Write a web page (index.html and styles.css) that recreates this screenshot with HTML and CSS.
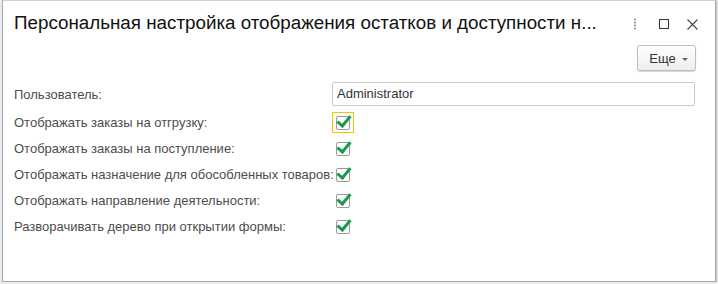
FILE: index.html
```html
<!DOCTYPE html>
<html lang="ru">
<head>
  <meta charset="UTF-8">
  <title>Персональная настройка</title>
  <link rel="stylesheet" href="styles.css">
</head>
<body>

<div class="window">
  <div class="titlebar">
    <div class="title">Персональная настройка отображения остатков и доступности н...</div>
    <div class="win-btns">
      <span class="btn-icon">
        <svg width="4" height="12" viewBox="0 0 4 12"><circle cx="2" cy="1.5" r="1" fill="#888"/><circle cx="2" cy="4.5" r="1" fill="#888"/><circle cx="2" cy="7.5" r="1" fill="#888"/><circle cx="2" cy="10.5" r="1" fill="#888"/></svg>
      </span>
      <span class="btn-icon">
        <svg width="10" height="10" viewBox="0 0 10 10"><rect x="0.5" y="0.5" width="9" height="9" fill="none" stroke="#333" stroke-width="1"/></svg>
      </span>
      <span class="btn-icon">
        <svg width="11" height="11" viewBox="0 0 11 11"><path d="M0.5 0.5 L10.5 10.5 M10.5 0.5 L0.5 10.5" stroke="#444" stroke-width="1.1"/></svg>
      </span>
    </div>
  </div>

  <div class="toolbar">
    <button class="more-btn">Еще <span class="caret"></span></button>
  </div>

  <div class="form">
    <div class="row">
      <div class="label">Пользователь:</div>
      <div class="input">Administrator</div>
    </div>
    <div class="row">
      <div class="label">Отображать заказы на отгрузку:</div>
      <div class="check-wrap focused"><span class="check"></span></div>
    </div>
    <div class="row">
      <div class="label">Отображать заказы на поступление:</div>
      <div class="check-wrap"><span class="check"></span></div>
    </div>
    <div class="row">
      <div class="label">Отображать назначение для обособленных товаров:</div>
      <div class="check-wrap"><span class="check"></span></div>
    </div>
    <div class="row">
      <div class="label">Отображать направление деятельности:</div>
      <div class="check-wrap"><span class="check"></span></div>
    </div>
    <div class="row">
      <div class="label">Разворачивать дерево при открытии формы:</div>
      <div class="check-wrap"><span class="check"></span></div>
    </div>
  </div>
</div>

</body>
</html>
```

FILE: styles.css
```css
body {
  margin: 0;
  background: #ececec;
  font-family: 'Liberation Sans', Arial, sans-serif;
  color: #4d4d4d;
}

.window {
  margin: 0 2px 0 2px;
  height: 282px;
  box-sizing: border-box;
  background: #fff;
  border: 1px solid #a9a9a9;
  border-top-color: #d0d0d0;
  box-shadow: 1px 1px 1px #c8c8c8;
}

.titlebar {
  display: flex;
  align-items: center;
  height: 46px;
  padding: 0 8px 0 11px;
}

.title {
  flex: 1;
  font-size: 18.8px;
  color: #111;
  white-space: nowrap;
  padding-bottom: 2px;
}

.win-btns {
  display: flex;
  align-items: center;
}

.btn-icon {
  width: 29px;
  display: flex;
  justify-content: center;
  align-items: center;
}

.toolbar {
  display: flex;
  justify-content: flex-end;
  padding: 0 19px 0 0;
  height: 32px;
}

.more-btn {
  height: 26px;
  width: 59px;
  margin-top: -2px;
  padding: 0 0 0 4px;
  border: 1px solid #bdbdbd;
  border-radius: 3px;
  background: linear-gradient(#ffffff, #eeeeee);
  box-shadow: 0 1px 1px #d4d4d4;
  font-family: 'Liberation Sans', Arial, sans-serif;
  font-size: 13px;
  color: #333;
  display: flex;
  align-items: center;
  justify-content: center;
  gap: 6px;
}

.caret {
  width: 0;
  height: 0;
  border-left: 3px solid transparent;
  border-right: 3px solid transparent;
  border-top: 3px solid #666;
  margin-top: 2px;
}

.form {
  padding: 1px 20px 0 11px;
}

.row {
  display: flex;
  align-items: center;
  height: 26px;
}

.row:first-child {
  height: 28px;
  margin-bottom: 1px;
}

.label {
  width: 318px;
  flex: none;
  font-size: 13px;
  white-space: nowrap;
}

.input {
  flex: 1;
  height: 24px;
  box-sizing: border-box;
  border: 1px solid #c9c9c9;
  border-radius: 2px;
  padding: 3px 4px;
  font-size: 13px;
  color: #333;
}

.check-wrap {
  width: 22px;
  height: 21px;
  box-sizing: border-box;
  border: 1px solid transparent;
  display: flex;
  align-items: center;
  justify-content: center;
}

.check-wrap.focused {
  border-color: #f2c400;
}

.check {
  position: relative;
  width: 14px;
  height: 14px;
  box-sizing: border-box;
  border: 1px solid #9a9a9a;
  border-radius: 2px;
  background: #fff;
  margin-top: 2px;
}

.check::after {
  content: "";
  position: absolute;
  left: 3px;
  top: -4px;
  width: 5px;
  height: 11px;
  border-right: 3px solid #1a9b4c;
  border-bottom: 3px solid #1a9b4c;
  transform: rotate(40deg);
}
```
